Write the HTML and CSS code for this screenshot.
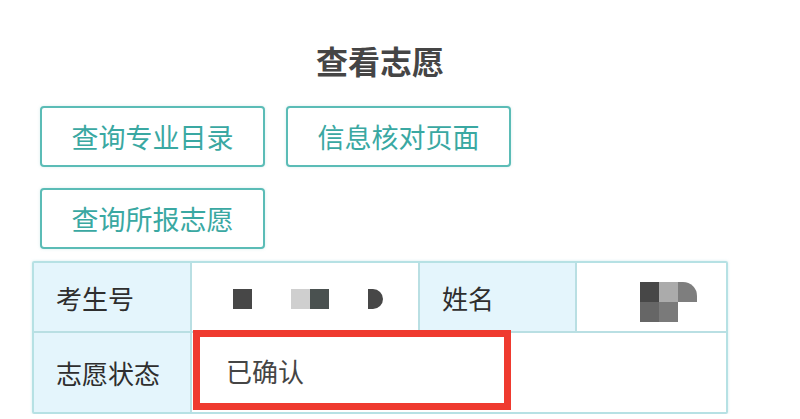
FILE: index.html
```html
<!DOCTYPE html>
<html>
<head>
  <meta charset="utf-8">
  <title>查看志愿</title>
  <link rel="stylesheet" href="styles.css">
</head>
<body>
  <div class="page">
    <h1>查看志愿</h1>

    <div class="actions">
      <button class="btn">查询专业目录</button>
      <button class="btn">信息核对页面</button>
      <button class="btn">查询所报志愿</button>
    </div>

    <div class="info-table">
      <div class="label">考生号</div>
      <div class="value">
        <div class="mosaic id-mosaic">
          <span class="px dark"></span>
          <span class="px light gap"></span>
          <span class="px slate"></span>
          <span class="px dark round gap"></span>
        </div>
      </div>
      <div class="label">姓名</div>
      <div class="value">
        <div class="mosaic name-mosaic">
          <span class="px dark"></span>
          <span class="px silver"></span>
          <span class="px mid round"></span>
          <span class="px grey"></span>
          <span class="px grey2"></span>
        </div>
      </div>

      <div class="label">志愿状态</div>
      <div class="value wide">
        <div class="status">已确认</div>
      </div>
    </div>
  </div>
</body>
</html>
```

FILE: styles.css
```css
* {
  box-sizing: border-box;
  margin: 0;
  padding: 0;
}
body {
  font-family: "Noto Sans CJK SC", "Noto Sans", sans-serif;
  background-color: #fff;
  color: #333;
}
.page {
  width: 696px;
  margin-left: 32px;
  padding-top: 38px;
}
h1 {
  text-align: center;
  font-size: 32px;
  line-height: 44px;
  font-weight: bold;
  color: #454545;
  margin-bottom: 24px;
}

.actions {
  display: grid;
  grid-template-columns: 225px 225px;
  column-gap: 21px;
  row-gap: 21px;
  padding-left: 8px;
  margin-bottom: 12px;
}
.btn {
  height: 61px;
  background-color: #fff;
  border: 2px solid #5bbcb6;
  border-radius: 4px;
  font-family: inherit;
  font-size: 27px;
  color: #3aa8a2;
  box-shadow: 0 0 3px rgba(91, 188, 182, 0.25);
}

.info-table {
  display: grid;
  grid-template-columns: 158px 228px 157px 1fr;
  grid-template-rows: 70px 79px;
  border: 2px solid #b6e1e4;
  border-radius: 2px;
  box-shadow: 0 0 3px rgba(150, 210, 215, 0.4);
}
.label,
.value {
  display: flex;
  align-items: center;
  border-right: 2px solid #b9dfe3;
  border-bottom: 2px solid #b9dfe3;
  font-size: 26px;
}
.label {
  background-color: #e4f5fc;
  padding-left: 22px;
  color: #2e2e2e;
}
.value {
  background-color: #fff;
}
.info-table > :nth-child(4) {
  border-right: none;
}
.info-table > :nth-child(n+5) {
  border-bottom: none;
}
.value.wide {
  grid-column: 2 / 5;
  border-right: none;
  position: relative;
}

.status {
  position: absolute;
  left: 1px;
  top: -3px;
  width: 318px;
  height: 80px;
  border: 7px solid #ef3a2f;
  padding-left: 26px;
  display: flex;
  align-items: center;
  color: #454545;
  font-size: 26px;
}

.mosaic {
  display: flex;
  flex-wrap: wrap;
}
.px {
  width: 19px;
  height: 20px;
}
.id-mosaic {
  margin-left: 41px;
  margin-top: 4px;
}
.id-mosaic .gap {
  margin-left: 39px;
}
.id-mosaic .round {
  margin-left: 39px;
  width: 15px;
  border-radius: 0 10px 10px 0;
}
.name-mosaic {
  width: 57px;
  margin-left: 63px;
  margin-top: 10px;
}
.dark { background-color: #474747; }
.light { background-color: #cfcfcf; }
.slate { background-color: #4a5150; }
.silver { background-color: #ababab; }
.mid { background-color: #7e7e7e; }
.grey { background-color: #666; }
.grey2 { background-color: #7a7a7a; }
.name-mosaic .round {
  border-radius: 0 14px 0 0;
}
```
